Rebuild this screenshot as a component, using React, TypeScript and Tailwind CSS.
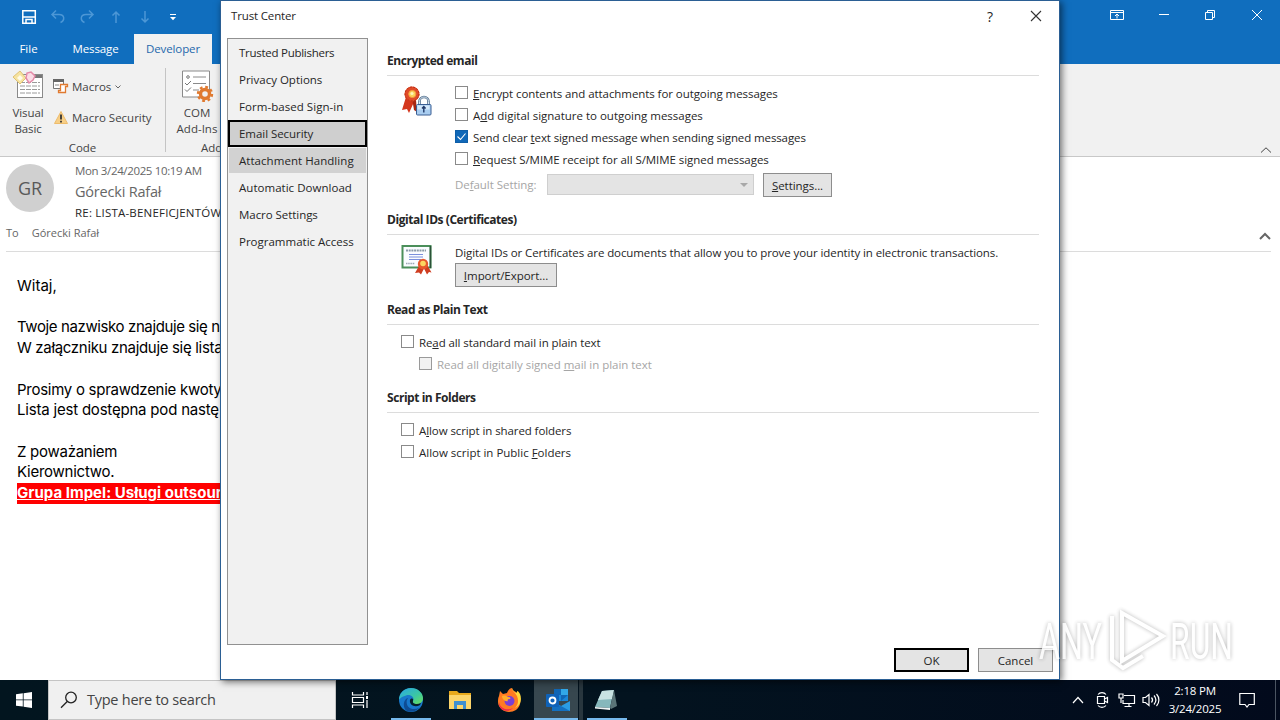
import { ReactNode, useState } from "react";
import clsx from "clsx";

const navItems = [
  { label: "Trusted Publishers", tracking: "tracking-[-0.27px]" },
  { label: "Privacy Options", tracking: "tracking-normal" },
  { label: "Form-based Sign-in", tracking: "tracking-[0.05px]" },
  { label: "Email Security", tracking: "tracking-[-0.05px]" },
  { label: "Attachment Handling", tracking: "tracking-[0.05px]" },
  { label: "Automatic Download", tracking: "tracking-[0.03px]" },
  { label: "Macro Settings", tracking: "tracking-[-0.05px]" },
  { label: "Programmatic Access", tracking: "tracking-normal" },
];

const Section = ({
  title,
  className,
  children,
}: {
  title: string;
  className?: string;
  children: ReactNode;
}) => (
  <section className={className}>
    <h2 className="h-4 text-[12px] leading-[17px] font-bold whitespace-nowrap tracking-[-0.45px]">
      {title}
    </h2>
    <div className="mt-[7px] border-t border-[#dcdcdc] pt-[10px]">
      {children}
    </div>
  </section>
);

const Check = ({
  children,
  defaultOn = false,
  disabled = false,
  className,
}: {
  children: ReactNode;
  defaultOn?: boolean;
  disabled?: boolean;
  className?: string;
}) => {
  const [on, setOn] = useState(defaultOn);

  return (
    <div
      onClick={() => !disabled && setOn(!on)}
      className={clsx("flex h-[13px] gap-[5px] whitespace-nowrap", className)}
    >
      <span
        className={clsx(
          "size-[13px] shrink-0 border",
          on
            ? "border-[#0f5fa8] bg-[#1068b8]"
            : disabled
              ? "border-[#9a9a9a] bg-[#f2f2f2]"
              : "border-[#8a8a8a] bg-white"
        )}
      >
        {on && (
          <svg viewBox="0 0 11 11" className="size-[11px]">
            <path d="M1.500 5.500l3 3 5-6" fill="none" stroke="#fff" strokeWidth="1.100" />
          </svg>
        )}
      </span>
      <span className={clsx("leading-4", disabled && "text-[#a6a6a6]")}>
        {children}
      </span>
    </div>
  );
};

const Button = ({
  children,
  className,
}: {
  children: ReactNode;
  className?: string;
}) => (
  <button
    className={clsx(
      "flex h-6 items-center justify-center bg-[#e4e4e4] pt-px whitespace-nowrap",
      className
    )}
  >
    {children}
  </button>
);

/* red ribbon with a padlock */
const SecurityIcon = () => (
  <svg viewBox="0 0 32 32" className="size-8">
    <path d="M5 11L1 24l5-1 2 4 5-11z" fill="#d4361c" />
    <path d="M11 12l2 12 3 2-1-12z" fill="#a82612" />
    <circle cx="11" cy="8" r="7.500" fill="#e04a28" />
    <circle cx="11" cy="8" r="7" fill="none" stroke="#b82c14" strokeWidth="1" strokeDasharray="2 1.400" />
    <circle cx="11.300" cy="8" r="3.600" fill="#fbd25a" stroke="#f39a3c" />
    <circle cx="11" cy="7.500" r="1.600" fill="#fff3b8" />
    <path d="M18.500 19v-3.500a4.500 4.500 0 0 1 9 0V19" fill="none" stroke="#55708c" strokeWidth="2.600" />
    <path d="M18.500 19v-3.500a4.500 4.500 0 0 1 9 0V19" fill="none" stroke="#d5e5f3" strokeWidth="1" />
    <rect x="15.500" y="18.500" width="14.500" height="10.500" rx="1" fill="#a9cdf0" stroke="#3a5f94" />
    <path d="M16.500 19.500h12v4h-12z" fill="#d4e8fa" />
    <path d="M22.800 20.500v6M21 22.500l1.800-2 1.800 2" fill="none" stroke="#1f3868" strokeWidth="1.400" />
  </svg>
);

const CertificateIcon = () => (
  <svg viewBox="0 0 32 32" className="size-8">
    <rect x="1.500" y="1" width="28" height="21.500" fill="#fafcff" stroke="#4b8f5a" strokeWidth="2" />
    <path d="M29.500 1v22" stroke="#2b5238" strokeWidth="1.500" />
    <path d="M5 5.500h20" stroke="#8a9aa8" strokeWidth="2" strokeDasharray="2 0.700" />
    <path d="M8 9.500h14M8 12h14M8 14.500h12" stroke="#7a90dc" />
    <path d="M5 18.500h9" stroke="#9aa6b4" strokeWidth="1.500" strokeDasharray="1.500 0.700" />
    <path d="M18 21l-4 7 4-.5 2 2 3-6 3 6 2-2.500 2.500.5-4-7z" fill="#cf3d20" />
    <circle cx="22" cy="19" r="5.200" fill="#e6582c" />
    <circle cx="22" cy="18.500" r="2.800" fill="#fcd660" />
  </svg>
);

const TrustCenter = () => {
  const [selected, setSelected] = useState("Email Security");

  return (
    <div className="absolute top-0 left-[220px] flex h-[680px] w-[840px] flex-col border border-[#2b5f94] bg-white text-[11.5px] text-[#262626] shadow-[2px_2px_7px_rgba(0,0,0,0.55)]">
      <div className="flex h-[30px] shrink-0 items-center pr-[17px] pl-[10px]">
        <span className="tracking-[-0.15px]">Trust Center</span>
        <span className="ml-auto text-[14px]">?</span>
        <svg viewBox="0 0 12 12" className="ml-[37px] size-3">
          <path d="M1 1l10 10M11 1L1 11" stroke="#333" strokeWidth="1.100" />
        </svg>
      </div>

      <div className="mt-[7px] ml-[6px] flex">
        <nav className="h-[607px] w-[141px] shrink-0 border border-[#919191] bg-[#f1f1f1]">
          {navItems.map((item) => (
            <div
              key={item.label}
              onClick={() => setSelected(item.label)}
              className={clsx(
                "flex h-[27px] items-center whitespace-nowrap",
                item.tracking,
                selected === item.label
                  ? "border-2 border-black bg-[#cfcfcf] pl-[9px]"
                  : "border border-transparent bg-clip-padding pl-[10px]",
                item.label === "Attachment Handling" &&
                  selected !== item.label &&
                  "bg-[#d2d2d2]"
              )}
            >
              {item.label}
            </div>
          ))}
        </nav>

        <div className="ml-[19px] w-[652px] pt-[14px]">
          <Section title="Encrypted email">
            <div className="flex">
              <div className="w-[68px] pl-[14px]">
                <SecurityIcon />
              </div>
              <div>
                <div className="flex flex-col gap-[9px]">
                  <Check className="tracking-[-0.07px]">
                    <u>E</u>ncrypt contents and attachments for outgoing messages
                  </Check>
                  <Check className="tracking-[-0.01px]">
                    A<u>d</u>d digital signature to outgoing messages
                  </Check>
                  <Check defaultOn className="tracking-[-0.11px]">
                    Send clear <u>t</u>ext signed message when sending signed messages
                  </Check>
                  <Check className="tracking-[-0.06px]">
                    <u>R</u>equest S/MIME receipt for all S/MIME signed messages
                  </Check>
                </div>
                <div className="mt-2 flex h-6">
                  <span className="w-[92px] pt-[4px] leading-4 text-[#a6a6a6] tracking-[-0.05px]">
                    De<u>f</u>ault Setting:
                  </span>
                  <div className="mt-px flex h-[21px] w-[207px] items-center justify-end border border-[#cfcfcf] bg-[#e4e4e4] pr-[5px]">
                    <svg viewBox="0 0 8 4" className="h-1 w-2">
                      <path d="M0 0h8L4 4z" fill="#a8a8a8" />
                    </svg>
                  </div>
                  <Button className="ml-[9px] w-[69px] border border-[#8d8d8d] tracking-[-0.05px]">
                    <span><u>S</u>ettings...</span>
                  </Button>
                </div>
              </div>
            </div>
          </Section>

          <Section title="Digital IDs (Certificates)" className="mt-[14px]">
            <div className="flex h-[42px]">
              <div className="w-[68px] pl-[14px]">
                <CertificateIcon />
              </div>
              <div>
                <p className="h-4 leading-4 whitespace-nowrap tracking-[-0.09px]">
                  Digital IDs or Certificates are documents that allow you to prove
                  your identity in electronic transactions.
                </p>
                <Button className="mt-0.5 w-[102px] border border-[#8d8d8d] tracking-[-0.05px]">
                  <span><u>I</u>mport/Export...</span>
                </Button>
              </div>
            </div>
          </Section>

          <Section title="Read as Plain Text" className="mt-[14px]">
            <div className="flex flex-col gap-[9px] pl-[14px]">
              <Check className="tracking-[-0.1px]">
                Re<u>a</u>d all standard mail in plain text
              </Check>
              <Check disabled className="ml-[18px] tracking-[-0.03px]">
                Read all digitally signed <u>m</u>ail in plain text
              </Check>
            </div>
          </Section>

          <Section title="Script in Folders" className="mt-[19px]">
            <div className="flex flex-col gap-[9px] pl-[14px]">
              <Check className="tracking-[-0.09px]">
                A<u>l</u>low script in shared folders
              </Check>
              <Check className="tracking-[-0.01px]">
                Allow script in Public <u>F</u>olders
              </Check>
            </div>
          </Section>
        </div>
      </div>

      <div className="mt-[3px] flex justify-end gap-[9px] pr-[6px]">
        <Button className="w-[75px] border-2 border-black">OK</Button>
        <Button className="w-[75px] border border-[#8d8d8d]">Cancel</Button>
      </div>
    </div>
  );
};

const TitleBar = () => (
  <div className="flex h-[34px] shrink-0 items-center bg-[#106ebe] pr-[18px] pl-[21px] text-white">
    <svg viewBox="0 0 16 16" className="size-4" fill="none" stroke="currentColor" strokeWidth="1.500">
      <path d="M1.800 1.800h12.500v12.500H1.800zM2 8h12M5 14v-3.500h6V14" />
    </svg>
    <div className="ml-[13px] flex gap-[13px] text-[#4c97d6]">
      <svg viewBox="0 0 16 16" className="size-4" fill="none" stroke="currentColor" strokeWidth="1.500">
        <path d="M6 1.500L2 5.500l4 4M2.500 5.500H9c6 0 6 6 1.500 8" />
      </svg>
      <svg viewBox="0 0 16 16" className="size-4" fill="none" stroke="currentColor" strokeWidth="1.500">
        <path d="M10 1.500l4 4-4 4M13.500 5.500H7c-6 0-6 6-1.500 8" />
      </svg>
      <svg viewBox="0 0 16 16" className="size-4" fill="none" stroke="currentColor" strokeWidth="1.500">
        <path d="M8 14V3M4.500 6.500L8 3l3.500 3.500" />
      </svg>
      <svg viewBox="0 0 16 16" className="size-4" fill="none" stroke="currentColor" strokeWidth="1.500">
        <path d="M8 2v11M4.500 9.500L8 13l3.500-3.500" />
      </svg>
    </div>
    <svg viewBox="0 0 8 8" className="ml-[16px] size-2">
      <path d="M1 1.500h6" stroke="#fff" />
      <path d="M1 4h6L4 7.300z" fill="#fff" />
    </svg>

    <div className="ml-auto flex items-center pb-1">
      <svg viewBox="0 0 14 12" className="h-3 w-3.5" fill="none" stroke="currentColor">
        <path d="M.5 1.500h13v9H.5zM.5 3.500h13M7 9.500V5M5 7l2-2 2 2" />
      </svg>
      <svg viewBox="0 0 10 10" className="ml-[35px] size-2.5" stroke="currentColor">
        <path d="M0 4.500h10" />
      </svg>
      <svg viewBox="0 0 10 10" className="ml-[36px] size-2.5" fill="none" stroke="currentColor">
        <path d="M.5 2.500h7v7h-7zM2.500 2.500V.5h7v7h-2" />
      </svg>
      <svg viewBox="0 0 10 10" className="ml-[37px] size-2.5" stroke="currentColor">
        <path d="M0 0l10 10M10 0L0 10" />
      </svg>
    </div>
  </div>
);

const Ribbon = () => (
  <div className="flex h-[93px] shrink-0 border-b border-[#c8c8c8] bg-[#f1f1f1] text-[11.5px] text-[#444]">
    <div className="flex w-[165px] flex-col">
      <div className="flex h-[76px]">
        <div className="w-[50px] shrink-0 pt-[6px] pl-[13px]">
          <svg viewBox="0 0 32 30" className="h-[30px] w-8">
            <rect x="4.500" y="4.500" width="25" height="23" fill="#fff" stroke="#8a8a8a" />
            <path d="M14 5h15v3H14z" fill="#777" />
            <path d="M7 12.500h20M7 16h20M7 19.500h20M7 23h20" stroke="#9a9a9a" strokeDasharray="5 1" />
            <path d="M7 1l6 7-6 6-7-7z" fill="#f6e3a0" stroke="#e0c274" />
            <path d="M7 5l3 3-3 3-3-3z" fill="#fffbe8" />
            <path d="M18 2l4 4-2 4-4 3-3-5 1-5z" fill="#fbdce6" stroke="#e58aa8" strokeWidth="1.500" />
          </svg>
          <div className="mt-[5px] -ml-[13px] w-14 text-center leading-[16px] tracking-[-0.1px]">
            Visual
            <br />
            Basic
          </div>
        </div>
        <div className="flex flex-col pl-[3px] whitespace-nowrap">
          <div className="mt-[15px] flex h-4 items-center">
            <svg viewBox="0 0 16 16" className="size-4">
              <path d="M.5 .5h10v9H.5z" fill="#fff" stroke="#777" />
              <path d="M0 0h11v3H0z" fill="#666" />
              <path d="M2 6h4" stroke="#888" />
              <path d="M7.500 5.500h7v2h-2v6h-7v-2h2z" fill="#fff" stroke="#e07a30" strokeWidth="1.300" />
            </svg>
            <span className="ml-[3px]">Macros</span>
            <svg viewBox="0 0 6 4" className="ml-1 h-1 w-1.5" fill="none" stroke="#666">
              <path d="M.5 .5L3 3 5.500 .5" />
            </svg>
          </div>
          <div className="mt-[15px] flex h-4 items-center">
            <svg viewBox="0 0 16 16" className="size-4">
              <path d="M8 1.500l6.500 12h-13z" fill="#f7cf87" stroke="#eebc6c" strokeLinejoin="round" />
              <path d="M8 4.500v5M8 10.800v1.700" stroke="#333" strokeWidth="1.800" />
            </svg>
            <span className="ml-[3px]">Macro Security</span>
          </div>
        </div>
      </div>
      <div className="text-center leading-4">Code</div>
    </div>

    <div className="mt-1 h-[84px] w-px bg-[#c4c4c4]" />

    <div className="w-[62px] pt-[6px]">
      <svg viewBox="0 0 32 32" className="ml-[16px] size-8">
        <path d="M.5 1h27v26H.5z" fill="#fff" stroke="#8a8a8a" />
        <path d="M11 7h13M11 13.500h13M11 20h6" stroke="#8a8a8a" />
        <circle cx="6" cy="7" r="1.300" fill="none" stroke="#777" />
        <path d="M3 13l2 2 4-4M3 19.500l2 2 4-4" fill="none" stroke="#777" />
        <circle cx="23" cy="24" r="4.500" fill="#f1f1f1" stroke="#e07a30" strokeWidth="3.400" />
        <circle cx="23" cy="24" r="7" fill="none" stroke="#e07a30" strokeWidth="2.400" strokeDasharray="2.750 2.750" />
      </svg>
      <div className="mt-[3px] w-[62px] text-center leading-[16px] whitespace-nowrap">
        COM
        <br />
        Add-Ins
      </div>
      <div className="mt-[3px] ml-[35px] leading-4 whitespace-nowrap">Add-ins</div>
    </div>

    <svg viewBox="0 0 12 6" className="mt-[83px] mr-[8px] ml-auto h-1.5 w-3" fill="none" stroke="#444">
      <path d="M1 5.500L6 .8l5 4.700" />
    </svg>
  </div>
);

const MessageHeader = () => (
  <div className="mr-[9px] ml-[6px] flex h-[95px] shrink-0 flex-col border-b border-[#dcdcdc] text-[#666]">
    <div className="flex pt-[7px]">
      <div className="flex size-12 items-center justify-center rounded-full bg-[#d0d0d0] text-[18px] text-[#595959]">
        GR
      </div>
      <div className="ml-[21px] whitespace-nowrap">
        <p className="text-[11.5px] leading-[14px] tracking-[-0.36px]">
          Mon 3/24/2025 10:19 AM
        </p>
        <p className="mt-[4px] text-[14.5px] leading-[20px] tracking-[-0.2px]">
          Górecki Rafał
        </p>
        <p className="mt-[3px] text-[11.5px] leading-[16px] text-[#262626] tracking-[0.2px]">
          RE: LISTA-BENEFICJENTÓW
        </p>
      </div>
    </div>
    <div className="mt-[4px] flex h-4 items-center text-[11px]">
      <span>To</span>
      <span className="ml-[13px]">Górecki Rafał</span>
      <svg viewBox="0 0 12 8" className="mt-[6px] ml-auto h-2 w-3" fill="none" stroke="#666" strokeWidth="2">
        <path d="M1 7l5-5 5 5" />
      </svg>
    </div>
  </div>
);

const MessageBody = () => (
  <div className="flex-1 pt-[24px] pl-[17px] font-[Inter,sans-serif] text-[15px] leading-[20.7px] whitespace-nowrap text-black">
    <p className="tracking-normal">Witaj,</p>
    <br />
    <p className="tracking-[-0.39px]">Twoje nazwisko znajduje się na liście</p>
    <p className="tracking-[-0.32px]">W załączniku znajduje się lista</p>
    <br />
    <p className="tracking-[-0.27px]">Prosimy o sprawdzenie kwoty</p>
    <p className="tracking-[-0.2px]">Lista jest dostępna pod nastę</p>
    <br />
    <p className="tracking-[-0.27px]">Z poważaniem</p>
    <p className="tracking-[-0.25px]">Kierownictwo.</p>
    <p>
      <span className="inline-block bg-[#f00] font-bold text-white underline tracking-[0.02px]">
        Grupa Impel: Usługi outsourcing
      </span>
    </p>
  </div>
);

const Taskbar = () => (
  <div className="flex h-10 shrink-0 items-center bg-linear-to-r from-[#02151f] via-[#03131f] to-[#020a1c] text-white">
    <div className="flex w-12 justify-center">
      <svg viewBox="0 0 16 16" className="size-4" fill="#fff">
        <path d="M0 2.200l6.800-.9v6.200H0zM7.600 1.200L16 0v7.500H7.600zM0 8.300h6.800v6.300L0 13.700zM7.600 8.300H16V16l-8.400-1.200z" />
      </svg>
    </div>
    <div className="flex h-10 w-[288px] items-center border border-[#c4c4c4] bg-[#f0f0f0] pl-[11px]">
      <svg viewBox="0 0 18 18" className="size-[18px]" fill="none" stroke="#222" strokeWidth="1.300">
        <circle cx="11" cy="6.500" r="5.300" />
        <path d="M7.200 10.500L1 16.800" />
      </svg>
      <span className="ml-[9px] text-[14.5px] text-[#444] tracking-[-0.25px]">Type here to search</span>
    </div>
    <div className="flex w-[50px] justify-center pr-[2px]">
      <svg viewBox="0 0 18 18" className="size-[18px]" fill="none" stroke="#fff" strokeWidth="1.200">
        <path d="M1.500 1v3h11V1M1.500 6.500h11v5h-11zM1.500 17v-3h11v3M16 1v3M16 9v8" />
        <path d="M15 5h2v3h-2z" fill="#fff" stroke="none" />
      </svg>
    </div>
    <div className="flex h-10 w-[49px] justify-center pt-2">
      <div className="flex h-8 w-10 justify-center border-b-2 border-[#76b9ed]">
        <svg viewBox="0 0 24 24" className="size-6">
          <defs>
            <linearGradient id="edgeTop" x1="0" x2="1" y1="0" y2="1">
              <stop offset="0" stopColor="#2aa8e8" />
              <stop offset="0.600" stopColor="#3cc8a0" />
              <stop offset="1" stopColor="#6ee058" />
            </linearGradient>
          </defs>
          <circle cx="12" cy="12" r="12" fill="#1878cc" />
          <path d="M0 12C0 5 5 0 12 0s12 5 12 10c0 4-3 6-6 6-4 0-5-1-4-3 2-4-3-7-7-5.500C3 8.500 0 11 0 12z" fill="url(#edgeTop)" />
          <path d="M9 10c-3 4-1 11 6 11 4 0 6-1.500 7-3.500-3 5-9 8-15 5C3 18 5 11 9 10z" fill="#0e4c94" />
          <path d="M14 13c-1 3 4 4 8 2l-1 2c-5 3-11 0-10-5 1-2 4-2 3 1z" fill="#06202c" />
        </svg>
      </div>
    </div>
    <div className="flex w-[49px] justify-center">
      <svg viewBox="0 0 22 20" className="h-5 w-[22px]">
        <path d="M0 1h8l2 2h12v16H0z" fill="#e8a91c" />
        <path d="M0 5h22v14H0z" fill="#fcd56b" />
        <path d="M5 19v-8h12v8h-3v-4H8v4z" fill="#3f8fd0" />
      </svg>
    </div>
    <div className="mr-px flex w-[49px] justify-center">
      <svg viewBox="0 0 24 24" className="size-6">
        <path d="M2 8l1-5 3 3 4-1c1-3 3-5 5-5 0 2 2 3 4 4l1 1c3 3 4 7 3 11-1 5-6 8-11 8S1 20 1 14c0-2 0-4 1-6z" fill="#ff7a22" />
        <path d="M15 0c0 3 3 4 5 8 2 5 1 9-2 12 6-3 7-9 5-14-1-2-2-3-3-3 0 1 0 2-1 2-2-1-3-3-4-5z" fill="#ffd83c" />
        <path d="M2 14c1 7 9 9 14 6-4 5-15 3-14-6z" fill="#f0284c" />
        <circle cx="12.500" cy="13" r="5" fill="#7a3fd4" />
        <path d="M5 8c3-1 4 0 6 1 2 0 3 1 2 2-2 0-3 1-2 2-3 1-6-2-6-5z" fill="#ffae2c" />
      </svg>
    </div>
    <div className="flex h-10 w-11 justify-center border-b-2 border-[#76b9ed] bg-[#37474f] pt-2 pl-1">
      <svg viewBox="0 0 24 24" className="size-6">
        <path d="M8 1h14v12H8z" fill="#1066b5" />
        <path d="M15 1h7v6h-7z" fill="#32a8e8" />
        <path d="M8 7h7v6H8zM15 13h7v-6z" fill="#1a86d8" />
        <path d="M6 13l9 5 9-5v10H6z" fill="#2a9ce4" />
        <path d="M6 23V13l18 10z" fill="#1470c0" />
        <rect y="6" width="13" height="13" rx="1" fill="#0f62b8" />
        <circle cx="6.500" cy="12.500" r="3" fill="none" stroke="#fff" strokeWidth="1.800" />
      </svg>
    </div>
    <div className="ml-px h-10 w-1 bg-[#28363e]" />
    <div className="ml-[4px] flex h-10 w-10 justify-center border-b-2 border-[#76b9ed] pt-2 pr-0.5">
      <svg viewBox="0 0 24 24" className="size-6">
        <path d="M8 3l12-1-4 18-15-1z" fill="#86b8bc" />
        <path d="M8 3l12-1-2 9-14 1z" fill="#c8e2e2" />
        <path d="M20 2l3 16-6 3-1-1z" fill="#5a7478" />
        <path d="M1 19l15 1v2L1 20.500z" fill="#eef4f4" />
      </svg>
    </div>

    <div className="ml-auto flex items-center">
      <svg viewBox="0 0 12 8" className="h-2 w-3" fill="none" stroke="#fff" strokeWidth="1.200">
        <path d="M1 7l5-5.500L11 7" />
      </svg>
      <svg viewBox="0 0 14 18" className="ml-[12px] h-[18px] w-3.5" fill="none" stroke="#fff" strokeWidth="1.200">
        <path d="M1.500 5.500h7v7h-7zM8.500 8l3-1.500v5l-3-1.500M2 3.500c2-2.500 6-2.500 8 0M2 14.500c2 2.500 6 2.500 8 0" />
      </svg>
      <svg viewBox="0 0 18 16" className="ml-[8px] h-4 w-[18px]" fill="none" stroke="#fff" strokeWidth="1.200">
        <path d="M6 3.500h10.500v8H5V8M1 2h4v4H1zM3 6v5M11 11.500V14M6.500 14.500h7" />
      </svg>
      <svg viewBox="0 0 18 16" className="ml-[6px] h-4 w-[18px]" fill="none" stroke="#fff" strokeWidth="1.200">
        <path d="M1 5.500h2.500L7 2.500v11l-3.500-3H1zM9.500 5.500c1.300 1.500 1.300 3.500 0 5M12 3.500c2.300 2.700 2.300 6.300 0 9M14.500 2c3.200 3.500 3.200 8.500 0 12" />
      </svg>
      <div className="ml-[8px] w-[54px] text-center text-[11.5px] leading-[18px] whitespace-nowrap">
        <div className="tracking-[-0.2px]">2:18 PM</div>
        <div className="-mx-2 tracking-[-0.2px]">3/24/2025</div>
      </div>
      <svg viewBox="0 0 16 16" className="ml-[17px] size-4" fill="none" stroke="#fff" strokeWidth="1.200">
        <path d="M.8 1.500h14.500v11H10l-2 2.500-2-2.500H.8z" />
      </svg>
      <div className="mr-1 ml-[20px] h-10 w-px bg-[#4b5562]" />
    </div>
  </div>
);

/* watermark drawn over the whole desktop */
const Watermark = () => (
  <svg
    viewBox="0 0 244 80"
    className="pointer-events-none absolute top-[600px] left-[1036px] h-[80px] w-[244px] overflow-visible font-[Roboto,sans-serif] opacity-80 drop-shadow-[0_0_2px_rgba(0,0,0,0.35)]"
    fill="#fff"
  >
    <text x="3" y="59" fontSize="50" textLength="63" lengthAdjust="spacingAndGlyphs">
      ANY
    </text>
    <text x="134" y="59" fontSize="50" textLength="63" lengthAdjust="spacingAndGlyphs">
      RUN
    </text>
    <path
      d="M86 13l41 23-41 25zM76 16v44l11 8 20-12"
      fill="none"
      stroke="#fff"
      strokeWidth="4"
    />
  </svg>
);

const App = () => {
  return (
    <div className="relative flex h-[720px] w-[1280px] flex-col overflow-hidden bg-white font-['Open_Sans','Noto_Sans',sans-serif]">
      <div className="relative flex h-[680px] flex-col">
        <TitleBar />
        <div className="flex h-[30px] shrink-0 items-center bg-[#106ebe] text-[11.5px] whitespace-nowrap text-white">
          <span className="w-[57px] text-center">File</span>
          <span className="w-[77px] text-center tracking-[-0.1px]">Message</span>
          <span className="flex h-[30px] w-[78px] items-center justify-center bg-[#f1f1f1] text-[#2468ac] tracking-[-0.1px]">
            Developer
          </span>
        </div>
        <Ribbon />
        <MessageHeader />
        <MessageBody />
        <TrustCenter />
      </div>
      <Taskbar />
      <Watermark />
    </div>
  );
};

export default App;
